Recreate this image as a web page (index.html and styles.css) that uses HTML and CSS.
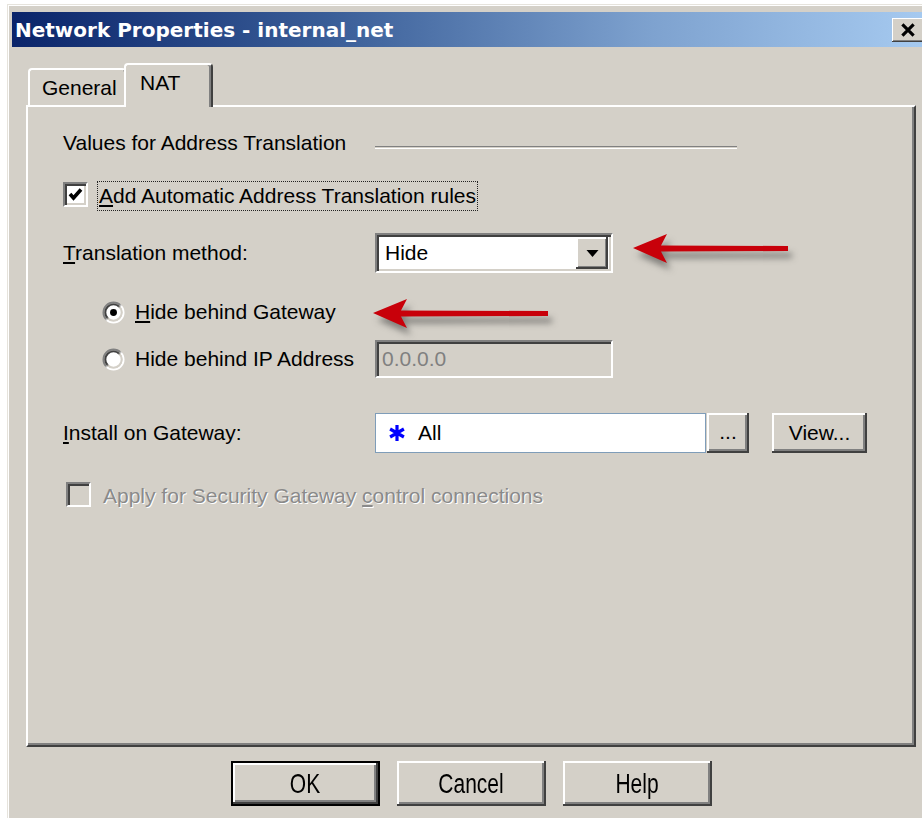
FILE: index.html
```html
<!DOCTYPE html>
<html lang="en">
<head>
<meta charset="utf-8">
<title>Network Properties - internal_net</title>
<link rel="stylesheet" href="styles.css">
</head>
<body>
<div class="window">
  <div class="titlebar">
    <span class="title">Network Properties - internal_net</span>
    <button class="close" aria-label="Close">
      <svg viewBox="0 0 16 14" width="18" height="16"><path d="M3 2 L13 12 M13 2 L3 12" stroke="#000" stroke-width="2.8" fill="none"/></svg>
    </button>
  </div>

  <div class="client">
    <div class="tabs">
      <div class="tab">General</div>
      <div class="tab active">NAT</div>
    </div>

    <div class="panel">
      <div class="row row-header">
        <span class="label-col">Values for Address Translation</span>
        <span class="etched"></span>
      </div>

      <div class="row row-check">
        <span class="checkbox">
          <svg viewBox="0 0 21 21" width="21" height="21"><path d="M5 10 L8.5 14 L16 5.5" stroke="#000" stroke-width="3.6" fill="none"/></svg>
        </span>
        <span class="focus"><u>A</u>dd Automatic Address Translation rules</span>
      </div>

      <div class="row row-method">
        <span class="label-col"><u>T</u>ranslation method:</span>
        <div class="combo">
          <span class="combo-text">Hide</span>
          <span class="combo-btn">
            <svg viewBox="0 0 12 7" width="13" height="7"><path d="M0 0 H12 L6 7 Z" fill="#000"/></svg>
          </span>
        </div>
      </div>

      <div class="row row-radio">
        <span class="label-col radio-line">
          <svg class="radio" viewBox="0 0 24 24" width="23" height="23">
            <defs>
              <linearGradient id="rOuter" x1="0" y1="0" x2="1" y2="1"><stop offset="0.45" stop-color="#808080"/><stop offset="0.55" stop-color="#ffffff"/></linearGradient>
              <linearGradient id="rInner" x1="0" y1="0" x2="1" y2="1"><stop offset="0.45" stop-color="#404040"/><stop offset="0.55" stop-color="#d4d0c8"/></linearGradient>
            </defs>
            <circle cx="12" cy="12" r="10.5" fill="none" stroke="url(#rOuter)" stroke-width="2"/>
            <circle cx="12" cy="12" r="8.5" fill="#fff" stroke="url(#rInner)" stroke-width="2"/>
            <circle cx="12" cy="12" r="3.6" fill="#000"/>
          </svg>
          <span><u>H</u>ide behind Gateway</span>
        </span>
      </div>

      <div class="row row-radio2">
        <span class="label-col radio-line">
          <svg class="radio" viewBox="0 0 24 24" width="23" height="23">
            <circle cx="12" cy="12" r="10.5" fill="none" stroke="url(#rOuter)" stroke-width="2"/>
            <circle cx="12" cy="12" r="8.5" fill="#fff" stroke="url(#rInner)" stroke-width="2"/>
          </svg>
          <span>Hide behind IP Address</span>
        </span>
        <div class="field disabled">0.0.0.0</div>
      </div>

      <div class="row row-install">
        <span class="label-col"><u>I</u>nstall on Gateway:</span>
        <div class="gw-field">
          <svg class="star" viewBox="0 0 18 18" width="18" height="18"><path d="M9 1 V17 M2.1 5 L15.9 13 M2.1 13 L15.9 5" stroke="#0000ff" stroke-width="3.2" fill="none"/></svg>
          <span>All</span>
        </div>
        <button class="btn btn-dots">...</button>
        <button class="btn btn-view">View...</button>
      </div>

      <div class="row row-apply">
        <span class="checkbox off"></span>
        <span class="disabled-text">Apply for Security Gateway <u>c</u>ontrol connections</span>
      </div>
    </div>

    <div class="buttons">
      <button class="btn btn-main btn-default"><span>OK</span></button>
      <button class="btn btn-main"><span>Cancel</span></button>
      <button class="btn btn-main"><span>Help</span></button>
    </div>
  </div>
</div>

<!-- callout arrows drawn over the dialog -->
<svg class="callout callout-method" viewBox="0 0 175 40" width="175" height="40">
  <path d="M3 14 L37 0 L31 11.5 L158 12 L158 17 L31 17.5 L37 29 Z" fill="#c8000a"/>
</svg>
<svg class="callout callout-gateway" viewBox="0 0 195 40" width="195" height="40">
  <path d="M3 14 L37 0 L31 11.5 L178 12 L178 17 L31 17.5 L37 29 Z" fill="#c8000a"/>
</svg>
</body>
</html>
```

FILE: styles.css
```css
html, body {
  margin: 0;
  padding: 0;
}

body {
  position: relative;
  width: 922px;
  height: 818px;
  overflow: hidden;
  background: #fff;
  font-family: "Liberation Sans", Arial, sans-serif;
  font-size: 21px;
  color: #000;
}

u {
  text-decoration-thickness: 2px;
  text-underline-offset: 2px;
}

/* ---------- window frame ---------- */
.window {
  box-sizing: border-box;
  width: 940px;
  height: 830px;
  margin: 4px 0 0 7px;
  padding: 7px 0 0 4px;
  background: #d4d0c8;
  border-top: 1px solid #e6e3dc;
  border-left: 1px solid #e6e3dc;
  box-shadow: inset 1px 1px 0 #fff;
}

.titlebar {
  display: flex;
  align-items: center;
  justify-content: space-between;
  width: 914px;
  height: 35px;
  background: linear-gradient(to right, #0a246a 0%, #3a5e98 35%, #7ea2cf 70%, #a6caf0 100%);
}

.title {
  padding-left: 3px;
  font-family: "DejaVu Sans", sans-serif;
  font-weight: bold;
  font-size: 20px;
  color: #fff;
  white-space: nowrap;
}

.close {
  display: flex;
  align-items: center;
  justify-content: center;
  width: 32px;
  height: 24px;
  margin-right: 2px;
  padding: 0;
  border: 0;
  background: #d4d0c8;
  box-shadow: inset -1px -1px #404040, inset 1px 1px #fff, inset -2px -2px #808080;
}

/* ---------- tabs ---------- */
.client {
  padding-left: 14px;
}

.tabs {
  position: relative;
  z-index: 1;
  display: flex;
  align-items: flex-end;
  height: 44px;
  margin: 16px 0 -2px 2px;
}

.tab {
  box-sizing: border-box;
  height: 37px;
  width: 98px;
  margin-bottom: 2px;
  padding: 6px 0 0 12px;
  line-height: 24px;
  background: #d4d0c8;
  border: 2px solid #fff;
  border-bottom: 0;
  border-right-color: #404040;
  border-radius: 4px 4px 0 0;
}

.tab.active {
  height: 44px;
  width: 89px;
  margin: 0 0 0 -2px;
  padding-left: 14px;
  box-shadow: inset -2px 0 #808080;
}

/* ---------- tab page ---------- */
.panel {
  box-sizing: border-box;
  width: 890px;
  height: 642px;
  padding: 0 0 0 35px;
  border: 2px solid;
  border-color: #fff #404040 #404040 #fff;
  box-shadow: inset -2px -2px #808080;
}

.row {
  display: flex;
  align-items: center;
  white-space: nowrap;
}

.label-col {
  flex: none;
  width: 312px;
}

.row-header {
  height: 24px;
  margin-top: 24px;
}

.etched {
  width: 362px;
  height: 1px;
  margin-top: 8px;
  border-top: 1px solid #808080;
  border-bottom: 1px solid #fff;
}

.row-check {
  height: 30px;
  margin-top: 26px;
}

.checkbox {
  box-sizing: border-box;
  display: flex;
  align-items: center;
  justify-content: center;
  width: 25px;
  height: 25px;
  margin-top: -3px;
  background: #fff;
  border: 2px solid;
  border-color: #808080 #fff #fff #808080;
  box-shadow: inset 2px 2px #404040, inset -2px -2px #d4d0c8;
}

.checkbox.off {
  background: #d4d0c8;
}

.focus {
  box-sizing: border-box;
  height: 30px;
  margin-left: 9px;
  padding: 0 1px 0 1px;
  line-height: 28px;
  border: 1px dotted #222;
}

.row-method {
  height: 40px;
  margin-top: 22px;
}

.combo {
  box-sizing: border-box;
  display: flex;
  align-items: center;
  justify-content: space-between;
  width: 238px;
  height: 40px;
  padding: 0 3px 0 8px;
  background: #fff;
  border: 2px solid;
  border-color: #808080 #fff #fff #808080;
  box-shadow: inset 2px 2px #404040, inset -2px -2px #d4d0c8;
}

.combo-btn {
  display: flex;
  align-items: center;
  justify-content: center;
  width: 32px;
  height: 32px;
  background: #d4d0c8;
  box-shadow: inset -2px -2px #404040, inset 2px 2px #fff, inset -3px -3px #808080;
}

.radio-line {
  display: flex;
  align-items: center;
  box-sizing: border-box;
  padding-left: 39px;
  gap: 10px;
}

.row-radio {
  height: 24px;
  margin-top: 27px;
}

.row-radio2 {
  height: 38px;
  margin-top: 16px;
}

.field {
  box-sizing: border-box;
  width: 238px;
  height: 38px;
  padding-left: 5px;
  line-height: 34px;
  border: 2px solid;
  border-color: #808080 #fff #fff #808080;
  box-shadow: inset 2px 2px #404040, inset -2px -2px #d4d0c8;
}

.field.disabled {
  background: #d4d0c8;
  color: #808080;
}

.row-install {
  height: 40px;
  margin-top: 35px;
}

.gw-field {
  box-sizing: border-box;
  display: flex;
  align-items: center;
  gap: 12px;
  width: 331px;
  height: 40px;
  padding-left: 12px;
  background: #fff;
  border: 1px solid #7f9db9;
}

.btn {
  box-sizing: border-box;
  padding: 0;
  border: 0;
  background: #d4d0c8;
  font: inherit;
  color: #000;
  box-shadow: inset -2px -2px #404040, inset 2px 2px #fff, inset -4px -4px #808080;
}

.btn-dots {
  width: 42px;
  height: 40px;
  margin-left: 1px;
  padding-bottom: 2px;
}

.btn-view {
  width: 95px;
  height: 40px;
  margin-left: 23px;
}

.row-apply {
  height: 26px;
  margin-top: 30px;
  padding-left: 3px;
}

.disabled-text {
  margin-left: 12px;
  color: #8a8a8a;
  text-shadow: 1px 1px 0 #fff;
}

/* ---------- dialog buttons ---------- */
.buttons {
  display: flex;
  justify-content: center;
  gap: 17px;
  width: 890px;
  margin-top: 14px;
}

.btn-main {
  width: 149px;
  height: 45px;
}

.btn-main span {
  display: inline-block;
  transform: scaleY(1.3);
}

.btn-default {
  box-shadow: inset 0 0 0 2px #000, inset -4px -4px #404040, inset 4px 4px #fff, inset -6px -6px #808080;
}

/* ---------- red callout arrows ---------- */
.callout {
  position: absolute;
  filter: drop-shadow(4px 7px 3px rgba(50, 50, 50, 0.5));
}

.callout-method {
  left: 630px;
  top: 234px;
}

.callout-gateway {
  left: 370px;
  top: 299px;
}
```
